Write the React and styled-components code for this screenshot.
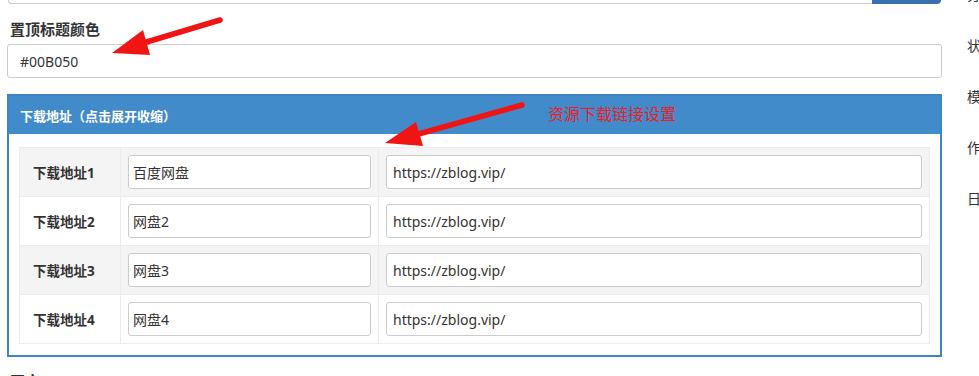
import React from 'react';
import styled, { createGlobalStyle } from 'styled-components';

const GlobalStyle = createGlobalStyle`
  html, body {
    margin: 0;
    padding: 0;
    background: #fff;
  }
  body {
    font-family: "Noto Sans", "Noto Sans CJK SC", sans-serif;
    color: #333;
  }
`;

const links = [
    { label: '下载地址1', name: '百度网盘', url: 'https://zblog.vip/' },
    { label: '下载地址2', name: '网盘2', url: 'https://zblog.vip/' },
    { label: '下载地址3', name: '网盘3', url: 'https://zblog.vip/' },
    { label: '下载地址4', name: '网盘4', url: 'https://zblog.vip/' },
];

const sideItems = ['分类', '状态', '模板', '作者', '日期'];

export default function App() {
    return (
        <Root>
            <GlobalStyle />
            <Page>
                <Main>
                    <InputGroup>
                        <TopInput readOnly value="" />
                        <AddonButton />
                    </InputGroup>

                    <Field>
                        <Label>置顶标题颜色</Label>
                        <TextInput readOnly value="#00B050" />
                    </Field>

                    <Panel>
                        <PanelHeading>下载地址（点击展开收缩）</PanelHeading>
                        <PanelBody>
                            <Table>
                                {links.map((link, i) => (
                                    <Row key={link.label} $striped={i % 2 === 0}>
                                        <LabelCell>{link.label}</LabelCell>
                                        <Cell>
                                            <CellInput readOnly value={link.name} $pad={4} />
                                        </Cell>
                                        <Cell>
                                            <CellInput readOnly value={link.url} $pad={6} />
                                        </Cell>
                                    </Row>
                                ))}
                            </Table>
                        </PanelBody>
                    </Panel>

                    <Label>正文</Label>
                </Main>

                <Sidebar>
                    {sideItems.map((item) => (
                        <SideItem key={item}>{item}</SideItem>
                    ))}
                </Sidebar>
            </Page>

            {/* annotations drawn on top of the screenshot */}
            <Arrows width="979" height="376" viewBox="0 0 979 376">
                <line x1="220" y1="20" x2="140" y2="44" stroke="#f01414" strokeWidth="5.5" strokeLinecap="round" />
                <polygon points="112,53 143,30 150,55" fill="#f01414" />
                <line x1="522" y1="105" x2="415" y2="135" stroke="#f01414" strokeWidth="5.5" strokeLinecap="round" />
                <polygon points="385,143 416,122 423,146" fill="#f01414" />
            </Arrows>
            <Note>资源下载链接设置</Note>
        </Root>
    );
}

const Root = styled.div`
position: relative;
width: 979px;
height: 376px;
overflow: hidden;
`

const Page = styled.div`
display: flex;
align-items: flex-start;
gap: 25px;
margin-top: -30px;
padding-left: 7px;
`

const Main = styled.div`
width: 935px;
flex-shrink: 0;
`

const InputGroup = styled.div`
display: flex;
height: 34px;
margin-left: 1px;
margin-right: 1px;
margin-bottom: 15px;
`

const TopInput = styled.input`
flex: 1;
box-sizing: border-box;
border: 1px solid #ccc;
border-right: none;
border-radius: 4px 0 0 4px;
outline: none;
`

const AddonButton = styled.div`
width: 69px;
background: #3870b2;
border-radius: 0 4px 4px 0;
`

const Field = styled.div`
margin-bottom: 16px;
`

const Label = styled.div`
font-size: 15px;
font-weight: bold;
line-height: 20px;
padding-left: 3px;
margin-bottom: 5px;
color: #333;
`

const TextInput = styled.input`
display: block;
box-sizing: border-box;
width: 100%;
height: 34px;
padding: 0 12px;
border: 1px solid #ccc;
border-radius: 3px;
font-family: inherit;
font-size: 14px;
color: #333;
outline: none;
`

const Panel = styled.div`
border: 2px solid #3f85c4;
margin-bottom: 14px;
`

const PanelHeading = styled.div`
height: 38px;
display: flex;
align-items: center;
padding: 0 11px;
background: #428bca;
color: #fff;
font-size: 13px;
font-weight: bold;
`

const PanelBody = styled.div`
padding: 13px 10px 11px;
`

const Table = styled.div`
border: 1px solid #ececec;
border-top: none;
`

const Row = styled.div`
display: grid;
grid-template-columns: 100px 258px 1fr;
height: 49px;
box-sizing: border-box;
border-top: 1px solid #ececec;
background: ${(p) => (p.$striped ? '#f4f4f4' : '#fff')};
`

const LabelCell = styled.div`
display: flex;
align-items: center;
padding-left: 13px;
font-size: 13.5px;
font-weight: bold;
color: #333;
`

const Cell = styled.div`
display: flex;
align-items: center;
padding: 0 7px;
border-left: 1px solid #ececec;
`

const CellInput = styled.input`
box-sizing: border-box;
width: 100%;
height: 34px;
padding: 0 ${(p) => p.$pad}px;
border: 1px solid #ccc;
border-radius: 3px;
background: #fff;
font-family: inherit;
font-size: 14px;
color: #333;
outline: none;
`

const Sidebar = styled.div`
display: flex;
flex-direction: column;
gap: 31px;
padding-top: 15px;
`

const SideItem = styled.div`
font-size: 14px;
line-height: 20px;
color: #333;
white-space: nowrap;
`

const Arrows = styled.svg`
position: absolute;
top: 0;
left: 0;
pointer-events: none;
`

const Note = styled.span`
position: absolute;
top: 104px;
left: 548px;
font-size: 16px;
line-height: 20px;
color: #e3232b;
`
